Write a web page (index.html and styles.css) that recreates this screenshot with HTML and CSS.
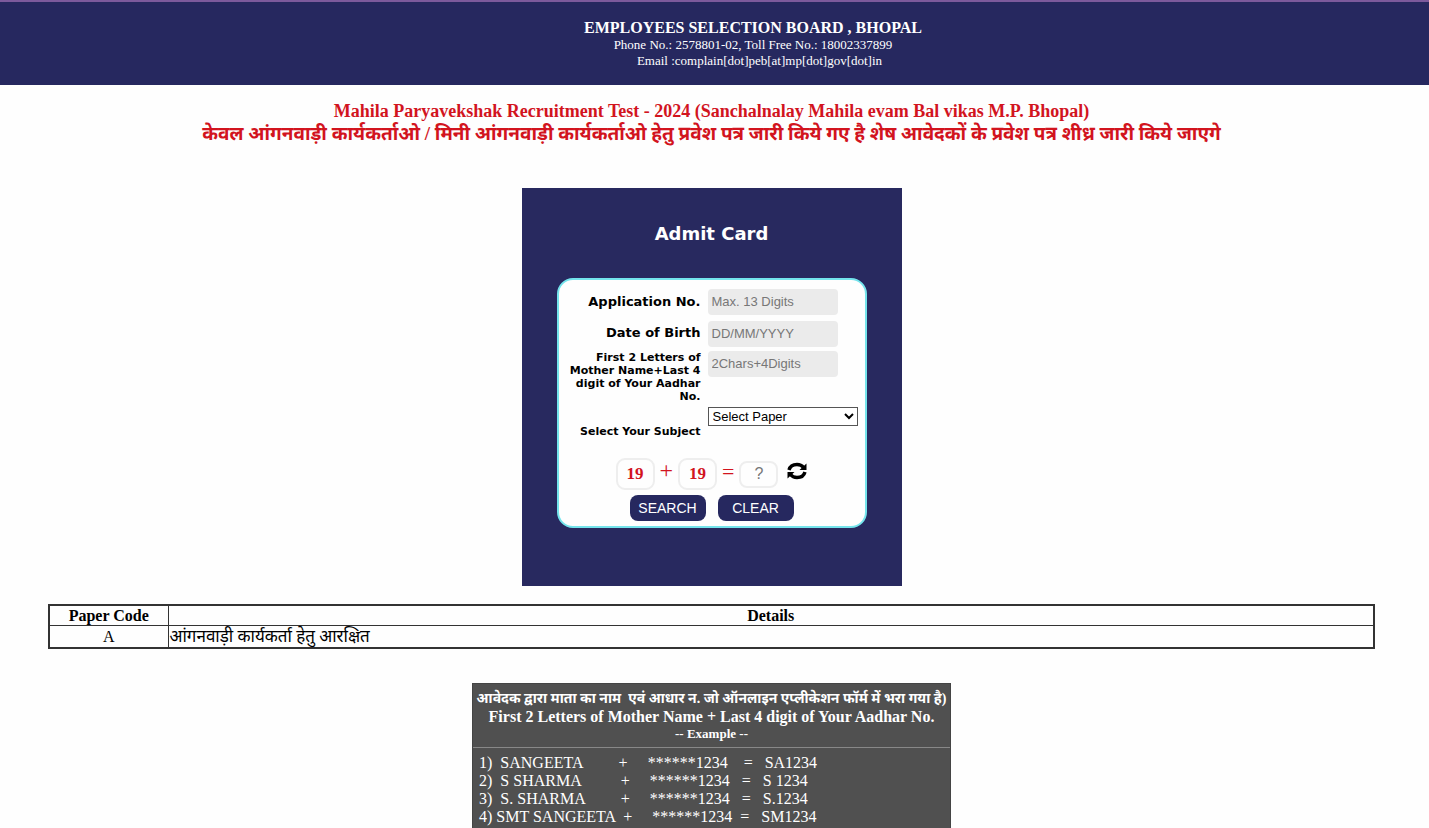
FILE: index.html
```html
<!DOCTYPE html>
<html lang="hi">
<head>
<meta charset="utf-8">
<title>Admit Card - Employees Selection Board, Bhopal</title>
<link rel="stylesheet" href="styles.css">
</head>
<body>
<header class="banner">
  <h1 class="banner-title">EMPLOYEES SELECTION BOARD , BHOPAL</h1>
  <p class="banner-line">Phone No.: 2578801-02, Toll Free No.: 18002337899</p>
  <p class="banner-line banner-email">Email :complain[dot]peb[at]mp[dot]gov[dot]in</p>
</header>
<main class="page">
  <section class="notice">
    <h2 class="notice-title">Mahila Paryavekshak Recruitment Test - 2024 (Sanchalnalay Mahila evam Bal vikas M.P. Bhopal)</h2>
    <p class="notice-text">केवल आंगनवाड़ी कार्यकर्ताओ / मिनी आंगनवाड़ी कार्यकर्ताओ हेतु प्रवेश पत्र जारी किये गए है शेष आवेदकों के प्रवेश पत्र शीध्र जारी किये जाएगे</p>
  </section>
  <section class="panel">
    <h2 class="panel-title">Admit Card</h2>
    <form class="card">
      <div class="fields">
        <label class="label" for="appno">Application No.</label>
        <input class="field" id="appno" type="text" placeholder="Max. 13 Digits">
        <label class="label" for="dob">Date of Birth</label>
        <input class="field field-tight" id="dob" type="text" placeholder="DD/MM/YYYY">
        <label class="label label-small label-top" for="code">First 2 Letters of Mother Name+Last 4 digit of Your Aadhar No.</label>
        <input class="field field-tight" id="code" type="text" placeholder="2Chars+4Digits">
        <label class="label label-small label-subject" for="paper">Select Your Subject</label>
        <select class="select" id="paper"><option>Select Paper</option></select>
      </div>
      <div class="captcha">
        <span class="number">19</span>
        <span class="operator">+</span>
        <span class="number">19</span>
        <span class="equals">=</span>
        <input class="answer" type="text" placeholder="?" aria-label="Answer">
        <button class="refresh" type="button" aria-label="Refresh">
          <svg width="20" height="18" viewBox="0 0 20 18" fill="none" stroke="#000" stroke-width="3.400">
            <path d="M2 8C3 4.200 6 2.500 10 2.500C13 2.500 15 3.500 16.500 5.500"/>
            <path d="M18 10C17 13.800 14 15.500 10 15.500C7 15.500 5 14.500 3.500 12.500"/>
            <path d="M19.500 1.500V8H12.500Z" fill="#000" stroke="none"/>
            <path d="M.5 16.500V10H7.500Z" fill="#000" stroke="none"/>
          </svg>
        </button>
      </div>
      <div class="actions">
        <button class="button" type="button">SEARCH</button>
        <button class="button" type="reset">CLEAR</button>
      </div>
    </form>
  </section>
  <table class="papers">
    <thead><tr><th class="code">Paper Code</th><th>Details</th></tr></thead>
    <tbody><tr><td class="code">A</td><td class="detail">आंगनवाड़ी कार्यकर्ता हेतु आरक्षित</td></tr></tbody>
  </table>
  <section class="help">
    <div class="help-head">
      <p class="help-hindi">आवेदक द्वारा माता का नाम&nbsp; एवं आधार न. जो ऑनलाइन एप्लीकेशन फॉर्म में भरा गया है)</p>
      <p class="help-title">First 2 Letters of Mother Name + Last 4 digit of Your Aadhar No.</p>
      <p class="help-example">-- Example --</p>
    </div>
    <div class="help-rows">
      <p class="help-row">1)  SANGEETA         +     ******1234    =   SA1234</p>
      <p class="help-row">2)  S SHARMA          +     ******1234   =   S 1234</p>
      <p class="help-row">3)  S. SHARMA         +     ******1234   =   S.1234</p>
      <p class="help-row">4) SMT SANGEETA  +     ******1234  =   SM1234</p>
    </div>
  </section>
</main>
</body>
</html>
```
FILE: styles.css
```css
* { box-sizing: border-box; }
body {
  margin: 0;
  background: #fefefe;
  color: #000;
  font-family: "Liberation Serif", "Noto Sans", "Noto Sans Devanagari", serif;
  font-size: 16px;
}
h1, h2, p { margin: 0; }
.banner {
  padding: 17px 0 16px 77px;
  border-top: 2px solid #7c5a9c;
  background: #26285f;
  color: #fff;
  text-align: center;
}
.banner-title { font-size: 16px; line-height: 18px; }
.banner-line { font-size: 13px; line-height: 16px; }
.banner-email { padding-left: 13px; }
.page { padding: 0 54px 0 48px; }
.notice { color: #d2141e; text-align: center; padding-top: 16px; }
.notice-title { font-size: 18px; line-height: 21px; }
.notice-text { font-size: 19px; line-height: 24px; font-weight: bold; }
.panel {
  width: 380px;
  margin: 42px auto 18px;
  padding: 34px 35px 58px;
  background: #28295f;
}
.panel-title {
  margin-bottom: 32px;
  color: #fff;
  font: bold 18px/24px "DejaVu Sans", sans-serif;
  text-align: center;
}
.card {
  padding: 9px 7px 5px;
  border: 2px solid #74e4ec;
  border-radius: 16px;
  background: #fefefe;
}
.fields {
  display: grid;
  grid-template-columns: 135px 1fr;
  column-gap: 7px;
  row-gap: 4px;
}
.label {
  align-self: center;
  padding-bottom: 2px;
  font: bold 13px/16px "DejaVu Sans", sans-serif;
  text-align: right;
}
.label-small { padding-bottom: 0; font-size: 11px; line-height: 13px; }
.label-top { align-self: start; }
.label-subject { padding-top: 18px; }
.field {
  width: 130px;
  height: 26px;
  margin-bottom: 2px;
  padding: 0 4px 1px;
  border: 0;
  border-radius: 4px;
  background: #ebebeb;
  font: 13px "Liberation Sans", sans-serif;
}
.field-tight { margin-bottom: 0; }
.field::placeholder, .answer::placeholder { color: #777; opacity: 1; }
.select {
  width: 150px;
  height: 19px;
  padding: 0;
  border: 1px solid #555;
  border-radius: 0;
  background: #fff;
  font: 13px "Liberation Sans", sans-serif;
}
.captcha {
  display: flex;
  align-items: center;
  justify-content: center;
  gap: 5px;
  height: 32px;
  margin-top: 20px;
  color: #d2141e;
}
.number {
  width: 39px;
  padding: 5px 0;
  border: 2px solid #eee;
  border-radius: 9px;
  font-size: 17px;
  font-weight: bold;
  line-height: 18px;
  text-align: center;
}
.operator { font-size: 24px; line-height: 24px; padding-bottom: 8px; }
.equals { font-size: 22px; line-height: 24px; padding-bottom: 4px; }
.answer {
  width: 39px;
  height: 27px;
  padding: 0;
  border: 2px solid #eee;
  border-radius: 8px;
  background: #fefefe;
  font: 16px "Liberation Sans", sans-serif;
  text-align: center;
}
.refresh {
  margin-left: 4px;
  padding: 0 0 6px;
  border: 0;
  background: none;
}
.refresh svg { display: block; }
.actions {
  display: flex;
  justify-content: center;
  gap: 12px;
  margin-top: 5px;
}
.button {
  width: 76px;
  height: 26px;
  padding: 0;
  border: 0;
  border-radius: 8px;
  background: #26285f;
  color: #fff;
  font: 14px "Liberation Sans", sans-serif;
}
.papers {
  width: 100%;
  border-collapse: collapse;
  border: 2px solid #333;
  line-height: 17px;
}
.papers th, .papers td { border: 1px solid #333; padding: 1px; }
.papers .code { width: 119px; text-align: center; }
.papers .detail { font-size: 17px; line-height: 19px; }
.help {
  width: 479px;
  margin: 34px auto 0;
  border: 1px solid #444;
  border-bottom: 0;
  background: #505050;
  color: #fff;
}
.help-head {
  padding: 6px 0 5px;
  border-bottom: 1px solid #888;
  text-align: center;
  font-weight: bold;
}
.help-hindi { font-size: 14px; line-height: 18px; white-space: nowrap; }
.help-title { font-size: 16px; line-height: 18px; }
.help-example { font-size: 13px; line-height: 16px; }
.help-rows { padding: 6px 6px 2px; }
.help-row { line-height: 18px; white-space: pre; }
```
